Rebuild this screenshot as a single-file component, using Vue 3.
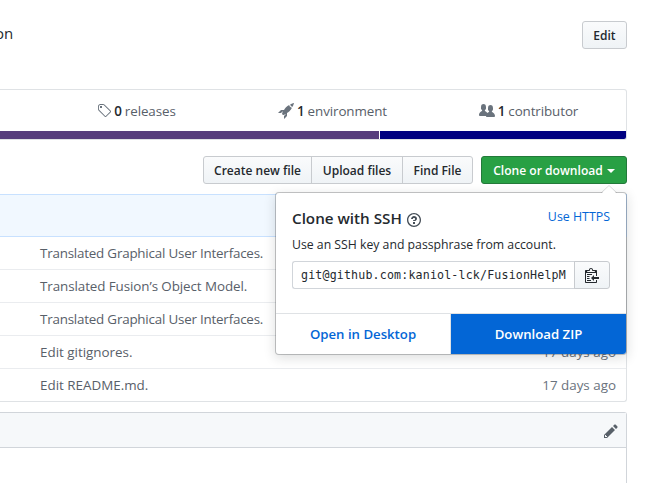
<script setup>
const icons = {
  tag: { w: 14, d: 'M7.73 1.73C7.26 1.26 6.62 1 5.96 1H3.5C2.13 1 1 2.13 1 3.5v2.47c0 .66.27 1.3.73 1.77l6.06 6.06c.39.39 1.02.39 1.41 0l4.59-4.59a.996.996 0 0 0 0-1.41L7.73 1.73zM2.38 7.09c-.31-.3-.47-.7-.47-1.13V3.5c0-.88.72-1.59 1.59-1.59h2.47c.42 0 .83.16 1.13.47l6.14 6.13-4.73 4.73-6.13-6.15zM3.01 3h2v2H3V3h.01z' },
  rocket: { w: 16, d: 'M12.17 3.83c-.27-.27-.47-.55-.63-.88-.16-.31-.27-.66-.34-1.02-.58.33-1.16.7-1.73 1.13-.58.44-1.14.94-1.69 1.48-.7.7-1.33 1.81-1.78 2.45H3L0 10h3l2-2c-.34.77-1.02 2.98-1 3l1 1c.02.02 2.23-.64 3-1l-2 2v3l3-3v-3c.64-.45 1.75-1.09 2.45-1.78.55-.55 1.05-1.13 1.47-1.7.44-.58.81-1.16 1.14-1.72-.36-.08-.7-.19-1.03-.34a3.39 3.39 0 0 1-.86-.63zM16 0s-.09.38-.3 1.06c-.2.7-.55 1.58-1.06 2.66-.7-.08-1.27-.33-1.66-.72-.39-.39-.63-.94-.7-1.64C13.36.84 14.23.48 14.92.28 15.62.08 16 0 16 0z' },
  people: { w: 16, d: 'M16 12.999c0 .439-.45 1-1 1H7.995c-.539 0-.994-.447-.995-.999H1c-.54 0-1-.561-1-1 0-2.634 3-4 3-4s.229-.409 0-1c-.841-.621-1.058-.59-1-3 .058-2.419 1.367-3 2.5-3s2.442.58 2.5 3c.058 2.41-.159 2.379-1 3-.229.59 0 1 0 1s1.549.711 2.42 2.088C9.196 9.369 10 8.999 10 8.999s.229-.409 0-1c-.841-.62-1.058-.59-1-3 .058-2.419 1.367-3 2.5-3s2.437.581 2.495 3c.059 2.41-.158 2.38-1 3-.229.59 0 1 0 1s3.005 1.366 3.005 4z' },
}

const stats = [
  { icon: icons.tag, count: 0, label: 'releases' },
  { icon: icons.rocket, count: 1, label: 'environment' },
  { icon: icons.people, count: 1, label: 'contributor' },
]

const rows = [
  { message: 'Translated Graphical User Interfaces.', age: '' },
  { message: 'Translated Fusion’s Object Model.', age: '' },
  { message: 'Translated Graphical User Interfaces.', age: '' },
  { message: 'Edit gitignores.', age: '17 days ago' },
  { message: 'Edit README.md.', age: '17 days ago' },
]
</script>

<template>
  <div class="page">
    <header class="about">
      <span class="description">on</span>
      <button class="btn edit">Edit</button>
    </header>

    <section class="summary">
      <ul class="stats">
        <li v-for="s in stats" :key="s.label">
          <svg :width="s.icon.w" height="16" :viewBox="`0 0 ${s.icon.w} 16`"><path :d="s.icon.d" /></svg>
          <span class="count">{{ s.count }}</span>
          <span class="label">{{ s.label }}</span>
        </li>
      </ul>
      <div class="languages"><i class="lang-a"></i><i class="lang-b"></i></div>
    </section>

    <nav class="toolbar">
      <div class="group">
        <button class="btn create">Create new file</button>
        <button class="btn upload">Upload files</button>
        <button class="btn find">Find File</button>
      </div>
      <div class="clone">
        <button class="btn primary"><span>Clone or download</span><i class="caret"></i></button>
        <div class="popover">
          <svg class="arrow" width="16" height="8" viewBox="0 0 16 8">
            <path d="M1 8 8 1l7 7z" fill="#fff" />
            <path d="M.5 7.5 8 .5l7.5 7" fill="none" stroke="#1b1f23" stroke-opacity=".15" />
          </svg>
          <div class="clone-body">
            <div class="title">
              <h4>Clone with SSH</h4>
              <svg class="help" width="14" height="16" viewBox="0 0 14 16"><path d="M6 10h2v2H6v-2zm4-3.5C10 8.64 8 9 8 9H6c0-.55.45-1 1-1h.5c.28 0 .5-.22.5-.5v-1c0-.28-.22-.5-.5-.5h-1c-.28 0-.5.22-.5.5V7H4c0-1.5 1.5-3 3-3s3 1 3 2.5zM7 2.3c3.14 0 5.7 2.56 5.7 5.7s-2.56 5.7-5.7 5.7A5.71 5.71 0 0 1 1.3 8c0-3.14 2.56-5.7 5.7-5.7zM7 1C3.14 1 0 4.14 0 8s3.14 7 7 7 7-3.14 7-7-3.14-7-7-7z" /></svg>
              <a class="https">Use HTTPS</a>
            </div>
            <p class="hint">Use an SSH key and passphrase from account.</p>
            <div class="url">
              <div class="field"><span>git@github.com:kaniol-lck/FusionHelpM</span></div>
              <button class="btn copy"><svg width="14" height="16" viewBox="0 0 14 16"><path d="M2 13h4v1H2v-1zm5-6H2v1h5V7zm2 3V8l-3 3 3 3v-2h5v-2H9zM4.5 9H2v1h2.5V9zM2 12h2.5v-1H2v1zm9 1h1v2c-.02.28-.11.52-.3.7-.19.18-.42.28-.7.3H1c-.55 0-1-.45-1-1V4c0-.55.45-1 1-1h3c0-1.11.89-2 2-2 1.11 0 2 .89 2 2h3c.55 0 1 .45 1 1v5h-1V6H1v9h10v-2zM2 5h8c0-.55-.45-1-1-1H8c-.55 0-1-.45-1-1s-.45-1-1-1-1 .45-1 1-.45 1-1 1H3c-.55 0-1 .45-1 1z" /></svg></button>
            </div>
          </div>
          <div class="actions">
            <a class="desktop">Open in Desktop</a>
            <a class="zip">Download ZIP</a>
          </div>
        </div>
      </div>
    </nav>

    <div class="tease"></div>
    <ul class="files">
      <li v-for="(r, i) in rows" :key="i">
        <span class="message">{{ r.message }}</span>
        <span class="age">{{ r.age }}</span>
      </li>
    </ul>

    <section class="readme">
      <div class="readme-head">
        <svg width="14" height="16" viewBox="0 0 14 16"><path d="M0 12v3h3l8-8-3-3-8 8zm3 2H1v-2h1v1h1v1zm10.3-9.3L12 6 9 3l1.3-1.3a.996.996 0 0 1 1.41 0l1.59 1.59c.39.39.39 1.02 0 1.41z" /></svg>
      </div>
    </section>
  </div>
</template>

<style>
body { background: #fff; overflow: hidden; }
</style>

<style scoped>
* { box-sizing: border-box; }
.page { width: 627px; height: 483px; display: flex; flex-direction: column; font: 13.4px/20px "Open Sans", "Noto Sans", sans-serif; color: #24292e; white-space: nowrap; }
ul, p, h4 { margin: 0; padding: 0; list-style: none; }
svg { display: block; fill: currentColor; flex: none; }
.about { height: 89px; flex: none; padding-top: 21px; display: flex; justify-content: space-between; align-items: flex-start; }
.description { font-size: 15px; line-height: 24px; margin-left: -5px; }
.btn { height: 28px; padding: 1px 0 0; border: 1px solid #c8cbcf; border-radius: 3px; background: linear-gradient(#fafbfc, #eff3f6); color: #24292e; font: 600 12px/18px "Open Sans", "Noto Sans", sans-serif; display: flex; align-items: center; justify-content: center; white-space: nowrap; }
.edit { width: 45px; }

.summary { height: 51px; flex: none; border: 1px solid #dfe2e5; border-left: 0; border-radius: 0 3px 3px 0; overflow: hidden; }
.stats { height: 41px; padding-left: 38px; display: flex; }
.stats li { width: 196px; display: flex; align-items: center; justify-content: center; color: #586069; padding: 1px 0 0 1px; letter-spacing: -.1px; }
.stats svg { color: #6a737d; margin-right: 3px; }
.count { font-weight: 600; color: #24292e; margin-right: 3px; }
.languages { height: 8px; display: flex; gap: 1px; }
.lang-a { width: 379px; background: #563d7c; }
.lang-b { flex: 1; background: #000080; }

.toolbar { height: 54px; flex: none; padding-top: 16px; display: flex; justify-content: flex-end; gap: 8px; }
.group { display: flex; }
.group .btn { border-radius: 0; }
.group .create { width: 109px; border-radius: 3px 0 0 3px; }
.group .upload { width: 92px; margin-left: -1px; }
.group .find { width: 71px; margin-left: -1px; border-radius: 0 3px 3px 0; }
.clone { position: relative; }
.primary { width: 146px; background: #28a044; border-color: #23793a; color: #fff; gap: 4px; font-size: 12.1px; }
.caret { border: 4px solid transparent; border-top-color: #fff; border-bottom: 0; margin-top: 1px; }

.popover { position: absolute; z-index: 2; top: 36px; right: 0; width: 352px; height: 163px; background: #fff; background-clip: padding-box; border: 1px solid rgba(27, 31, 35, .25); border-radius: 4px; box-shadow: 0 3px 12px rgba(27, 31, 35, .15); display: flex; flex-direction: column; }
.arrow { position: absolute; right: 9px; top: -8px; }
.clone-body { height: 121px; padding: 15px 16px 0; }
.title { display: flex; align-items: center; height: 20px; }
h4 { font-size: 15.2px; font-weight: 600; }
.help { margin: 3px 0 0 5px; color: #444d56; }
.https { margin-left: auto; font-size: 12.4px; color: #0366d6; margin-top: -2px; }
.hint { font-size: 12.25px; line-height: 18px; margin-top: 8px; }
.url { display: flex; margin-top: 7px; }
.field { width: 283px; height: 28px; border: 1px solid #d1d5da; border-right: 0; border-radius: 3px 0 0 3px; padding: 0 8px; font: 11.6px/26px "DejaVu Sans Mono", monospace; letter-spacing: .18px; overflow: hidden; }
.copy { width: 36px; margin-left: -1px; padding: 0; border-radius: 0 3px 3px 0; }
.actions { flex: 1; display: flex; border-top: 1px solid #dfe2e5; font-size: 13.2px; font-weight: 600; line-height: 40px; text-align: center; }
.desktop { width: 175px; border-right: 1px solid #dfe2e5; color: #0366d6; }
.zip { flex: 1; background: #0366d6; color: #fff; border-radius: 0 0 3px 0; }

.tease { height: 43px; flex: none; border: 1px solid #c8e1ff; border-left: 0; background: #f1f8ff; }
.files { flex: none; border: solid #dfe2e5; border-width: 0 1px 1px 0; border-radius: 0 0 3px 0; }
.files li { height: 33px; border-top: 1px solid #eaecef; padding: 0 10px 0 40px; display: flex; align-items: center; justify-content: space-between; color: #586069; }
.files li:first-child { height: 32px; border-top: 0; }
.files li:nth-child(odd):not(:last-child) .message { letter-spacing: -.21px; }
.files li:nth-child(2) .message { letter-spacing: -.08px; }
.age { color: #6a737d; }

.readme { flex: 1; margin-top: 10px; border: solid #d1d5da; border-width: 1px 1px 0 0; border-radius: 0 3px 0 0; }
.readme-head { height: 35px; background: #f6f8fa; border-bottom: 1px solid #d1d5da; display: flex; justify-content: flex-end; align-items: center; padding: 1px 8px 0 0; color: #586069; }
</style>
